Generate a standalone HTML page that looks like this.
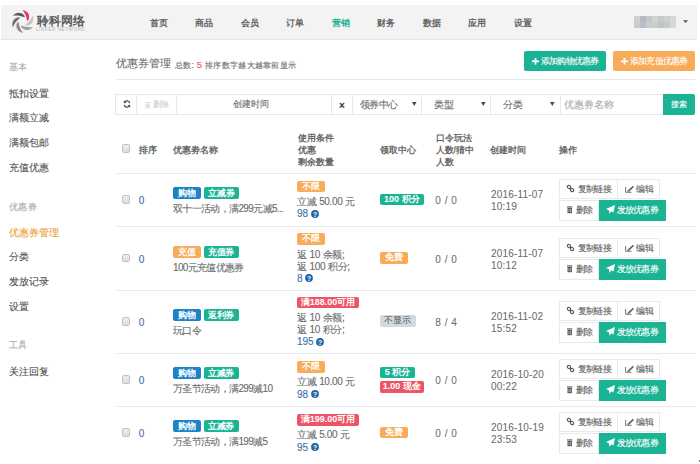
<!DOCTYPE html><html><head><meta charset="utf-8"><style>

*{box-sizing:border-box;margin:0;padding:0}
html,body{width:700px;height:464px;overflow:hidden;background:#fff}
body{position:relative;-webkit-text-stroke:0.1px currentColor;font-family:"Liberation Sans",sans-serif;color:#676a6c;font-size:10px;line-height:1}
.abs{position:absolute;white-space:nowrap}
.hdr{position:absolute;left:1px;top:5px;width:696px;height:35px;background:#f3f3f4;border-bottom:1px solid #e4e4e4}
.nav{position:absolute;-webkit-text-stroke:0;top:17.8px;font-size:9px;font-weight:bold;color:#626262;line-height:10px;width:40px;text-align:center}
.side{position:absolute;left:9px;font-size:9.7px;color:#4d4d4d;line-height:10px}
.side.g{color:#a9a9a9;font-size:9px;letter-spacing:0.3px;margin-top:-0.3px}
.side.act{color:#f0a033;margin-top:0.6px}
.btn{position:absolute;border-radius:2px;color:#fff;font-size:9px;line-height:20px;text-align:center;letter-spacing:-0.8px}
.fb{position:absolute;top:94px;height:21px;border:1px solid #e7e8e9;background:#fff;font-size:9.5px;line-height:19px}
.th{position:absolute;-webkit-text-stroke:0;margin-top:0.6px;font-size:9px;font-weight:bold;color:#666;line-height:12.3px}
.cb{position:absolute;left:121.6px;width:8.5px;height:8.7px;border:1px solid #c2c2c2;border-radius:2px;background:linear-gradient(#ededed,#dddddd)}
.rl{position:absolute;left:116px;width:579px;height:1px;background:#e7eaec}
.lbl{position:absolute;-webkit-text-stroke:0;height:12px;line-height:12px;font-size:9px;letter-spacing:-0.3px;word-spacing:1.5px;font-weight:bold;color:#fff;border-radius:2px;text-align:center}
.blue{background:#1c84c6}.green{background:#1ab394}.orange{background:#f8ac59}.red{background:#ed5565}.gray{background:#d1dade;color:#555;font-weight:normal}
.txt{position:absolute;font-size:10px;letter-spacing:-0.35px;word-spacing:0.4px;color:#676a6c;line-height:12px;white-space:nowrap}
.lnk{color:#3d6ea6}
.ob{position:absolute;height:20px;border:1px solid #e7eaec;background:#fff;font-size:9px;letter-spacing:-0.6px;line-height:18px;color:#5e5e5e;white-space:nowrap}
.og{position:absolute;height:21px;background:#1ab394;color:#fff;font-size:9px;letter-spacing:-0.7px;line-height:21px;white-space:nowrap}
svg{position:absolute;overflow:visible}

</style></head><body>
<div class="hdr"></div>
<svg style="left:0;top:0" width="50" height="40"><g transform="translate(22.8,21.4)"><path d="M-0.2,-11.5 C5.4,-10.5 7.8,-5.8 5.6,-1.2 Q5.1,-0.3 4.3,-0.8 C3.7,-4.6 2.3,-8.3 -0.2,-11.5 Z" fill="#e6336a" transform="rotate(0)"/><path d="M-0.2,-11.5 C5.4,-10.5 7.8,-5.8 5.6,-1.2 Q5.1,-0.3 4.3,-0.8 C3.7,-4.6 2.3,-8.3 -0.2,-11.5 Z" fill="#c4c4c4" transform="rotate(60)"/><path d="M-0.2,-11.5 C5.4,-10.5 7.8,-5.8 5.6,-1.2 Q5.1,-0.3 4.3,-0.8 C3.7,-4.6 2.3,-8.3 -0.2,-11.5 Z" fill="#a0a0a0" transform="rotate(120)"/><path d="M-0.2,-11.5 C5.4,-10.5 7.8,-5.8 5.6,-1.2 Q5.1,-0.3 4.3,-0.8 C3.7,-4.6 2.3,-8.3 -0.2,-11.5 Z" fill="#8a8a8a" transform="rotate(180)"/><path d="M-0.2,-11.5 C5.4,-10.5 7.8,-5.8 5.6,-1.2 Q5.1,-0.3 4.3,-0.8 C3.7,-4.6 2.3,-8.3 -0.2,-11.5 Z" fill="#6e6e6e" transform="rotate(240)"/><path d="M-0.2,-11.5 C5.4,-10.5 7.8,-5.8 5.6,-1.2 Q5.1,-0.3 4.3,-0.8 C3.7,-4.6 2.3,-8.3 -0.2,-11.5 Z" fill="#5c5c5c" transform="rotate(300)"/></g></svg>
<div class="abs" style="left:37px;top:14.5px;font-size:12px;font-weight:normal;color:#555;-webkit-text-stroke:0.45px #555;line-height:13px;letter-spacing:0px">聆科网络</div>
<div class="abs" style="left:36px;top:27.2px;font-size:4.9px;color:#b5b5b5;-webkit-text-stroke:0;line-height:5px;letter-spacing:0.35px">LINKER NETWORK</div>
<div class="nav" style="left:138.6px;">首页</div>
<div class="nav" style="left:184.1px;">商品</div>
<div class="nav" style="left:229.6px;">会员</div>
<div class="nav" style="left:275.1px;">订单</div>
<div class="nav" style="left:320.6px;color:#1ab394">营销</div>
<div class="nav" style="left:366.1px;">财务</div>
<div class="nav" style="left:411.6px;">数据</div>
<div class="nav" style="left:457.1px;">应用</div>
<div class="nav" style="left:502.6px;">设置</div>
<div class="abs" style="left:634px;top:16px;width:6px;height:6px;background:#d3cfcb"></div>
<div class="abs" style="left:640px;top:16px;width:6px;height:6px;background:#b3bac1"></div>
<div class="abs" style="left:646px;top:16px;width:6px;height:6px;background:#c6c6c4"></div>
<div class="abs" style="left:652px;top:16px;width:6px;height:6px;background:#d2d5d3"></div>
<div class="abs" style="left:658px;top:16px;width:6px;height:6px;background:#c5cad0"></div>
<div class="abs" style="left:664px;top:16px;width:6px;height:6px;background:#cfd0cc"></div>
<div class="abs" style="left:670px;top:16px;width:6px;height:6px;background:#d3d6da"></div>
<div class="abs" style="left:634px;top:22px;width:6px;height:6px;background:#cecbc8"></div>
<div class="abs" style="left:640px;top:22px;width:6px;height:6px;background:#b8bec3"></div>
<div class="abs" style="left:646px;top:22px;width:6px;height:6px;background:#cbcdcc"></div>
<div class="abs" style="left:652px;top:22px;width:6px;height:6px;background:#cacccc"></div>
<div class="abs" style="left:658px;top:22px;width:6px;height:6px;background:#bfc4c9"></div>
<div class="abs" style="left:664px;top:22px;width:6px;height:6px;background:#c9cac8"></div>
<div class="abs" style="left:670px;top:22px;width:6px;height:6px;background:#d6d8db"></div>
<svg style="left:683px;top:20px" width="6" height="4"><path d="M0,0.3 L5,0.3 L2.5,3 Z" fill="#555"/></svg>
<div class="side g" style="top:62.5px">基本</div>
<div class="side " style="top:88.8px">抵扣设置</div>
<div class="side " style="top:113.2px">满额立减</div>
<div class="side " style="top:137.6px">满额包邮</div>
<div class="side " style="top:163px">充值优惠</div>
<div class="side g" style="top:202px">优惠券</div>
<div class="side act" style="top:227.3px">优惠券管理</div>
<div class="side " style="top:252px">分类</div>
<div class="side " style="top:277px">发放记录</div>
<div class="side " style="top:302px">设置</div>
<div class="side g" style="top:340px">工具</div>
<div class="side " style="top:366.5px">关注回复</div>
<div class="abs" style="left:115.5px;top:57px;font-size:11.4px;color:#6a6a6a;line-height:13px">优惠券管理</div>
<div class="abs" style="left:175px;top:60px;font-size:8.4px;color:#6a6a6a;line-height:9px;letter-spacing:0.3px">总数: <span style="color:#ed5565;font-size:9.5px">5</span> 排序数字越大越靠前显示</div>
<div class="rl" style="top:79px"></div>
<div class="btn green" style="left:524px;top:51px;width:82px;height:20px;text-align:left"><svg style="left:7.5px;top:6.8px" width="7" height="7" viewBox="0 0 7 7"><rect x="2.6" y="0" width="1.8" height="6.6" fill="#fff"/><rect x="0" y="2.4" width="7" height="1.8" fill="#fff"/></svg><span style="position:absolute;left:17px;top:0">添加购物优惠券</span></div>
<div class="btn orange" style="left:613px;top:51px;width:82px;height:20px;text-align:left"><svg style="left:7.5px;top:6.8px" width="7" height="7" viewBox="0 0 7 7"><rect x="2.6" y="0" width="1.8" height="6.6" fill="#fff"/><rect x="0" y="2.4" width="7" height="1.8" fill="#fff"/></svg><span style="position:absolute;left:17px;top:0">添加充值优惠券</span></div>
<div class="fb" style="left:115px;width:22px;"></div>
<svg style="left:122.6px;top:100.3px" width="8" height="8" viewBox="0 0 9 9"><path d="M7.6,3.6 A3.3,3.3 0 0 0 1.5,2.6" stroke="#444" stroke-width="1.4" fill="none"/><path d="M0.6,0.8 L1.2,3.6 L4,3 Z" fill="#444"/><path d="M1.4,5.4 A3.3,3.3 0 0 0 7.5,6.4" stroke="#444" stroke-width="1.4" fill="none"/><path d="M8.4,8.2 L7.8,5.4 L5,6 Z" fill="#444"/></svg>
<div class="fb" style="left:136px;width:41px;"><svg style="left:7.5px;top:6.5px" width="6" height="7" viewBox="0 0 6 7"><rect x="0" y="0" width="5.5" height="1" fill="#ddd"/><rect x="0.4" y="1.6" width="4.7" height="4.8" fill="#e3e3e3"/></svg><span style="position:absolute;left:16px;top:0;color:#cfcfcf;font-size:8px;letter-spacing:0.4px">删除</span></div>
<div class="fb" style="left:176px;width:157px;"><span style="position:absolute;left:55.5px;color:#676a6c;font-size:9px">创建时间</span></div>
<div class="fb" style="left:331px;width:22px;"><span style="position:absolute;left:7px;top:0.5px;font-weight:bold;color:#3a3a3a;font-size:10px">×</span></div>
<div class="fb" style="left:352px;width:70px;"><span style="position:absolute;left:7px;color:#676a6c;font-size:10px;letter-spacing:-0.6px">领券中心</span></div>
<svg style="left:412.29999999999995px;top:102px" width="5" height="5"><path d="M0,0 L4.6,0 L2.3,4 Z" fill="#4a4a4a"/></svg>
<div class="fb" style="left:421px;width:70px;"><span style="position:absolute;left:11.5px;color:#676a6c;font-size:10px;letter-spacing:0px">类型</span></div>
<svg style="left:481.29999999999995px;top:102px" width="5" height="5"><path d="M0,0 L4.6,0 L2.3,4 Z" fill="#4a4a4a"/></svg>
<div class="fb" style="left:490px;width:70.60000000000002px;"><span style="position:absolute;left:11.5px;color:#676a6c;font-size:10px;letter-spacing:0px">分类</span></div>
<svg style="left:550.3px;top:102px" width="5" height="5"><path d="M0,0 L4.6,0 L2.3,4 Z" fill="#4a4a4a"/></svg>
<div class="fb" style="left:559.6px;width:104.39999999999998px;"><span style="position:absolute;left:3px;color:#aaa;font-size:10px">优惠券名称</span></div>
<div class="btn green" style="left:663px;top:94px;width:32px;height:21px;line-height:21px;border-radius:0 2px 2px 0;font-size:8px;letter-spacing:0.3px">搜索</div>
<div class="cb" style="top:144px"></div>
<div class="th" style="left:138.5px;top:143px">排序</div>
<div class="th" style="left:173.4px;top:143px">优惠劵名称</div>
<div class="th" style="left:297.5px;top:131px">使用条件<br>优惠<br>剩余数量</div>
<div class="th" style="left:380px;top:143px">领取中心</div>
<div class="th" style="left:435.5px;top:131px">口令玩法<br>人数/猜中<br>人数</div>
<div class="th" style="left:490px;top:143px">创建时间</div>
<div class="th" style="left:559.2px;top:143px">操作</div>
<div class="rl" style="top:172.5px"></div>
<div class="cb" style="top:195.1px"></div>
<div class="txt lnk" style="left:138.8px;top:194.89999999999998px;font-size:10px;letter-spacing:0">0</div>
<div class="lbl blue" style="left:173px;top:187.1px;width:27.5px">购物</div>
<div class="lbl green" style="left:203.5px;top:187.1px;width:35.5px">立减券</div>
<div class="txt" style="left:173px;top:202.89999999999998px;letter-spacing:-0.65px">双十一活动，满299元减5...</div>
<div class="lbl orange" style="left:297px;top:180.95px;width:27.5px;height:11.5px;line-height:11.5px;letter-spacing:0">不限</div>
<div class="txt" style="left:297px;top:196.04999999999998px">立减 50.00 元</div>
<div class="txt lnk" style="left:297px;top:208.35px;font-size:10px;letter-spacing:0">98</div>
<svg style="left:310.82px;top:209.64999999999998px" width="8" height="8" viewBox="0 0 8 8"><circle cx="4" cy="4" r="3.9" fill="#2064a8"/><text x="4" y="6.5" font-size="6.8" font-weight="bold" text-anchor="middle" fill="#fff" font-family="Liberation Sans">?</text></svg>
<div class="lbl green" style="left:380px;top:193.54999999999998px;width:43.7px;height:11.5px;line-height:11.5px;letter-spacing:0;word-spacing:0">100 积分</div>
<div class="txt" style="left:435.3px;top:195.1px;font-size:10px;letter-spacing:0;word-spacing:1px;-webkit-text-stroke:0.05px currentColor">0 / 0</div>
<div class="txt" style="left:491px;top:189.1px;font-size:10px;letter-spacing:0.18px;-webkit-text-stroke:0.05px currentColor">2016-11-07<br>10:19</div>
<div class="ob" style="left:559.2px;top:179px;width:58.5px"><svg style="left:5.6px;top:4.4px" width="9" height="9" viewBox="0 0 9 9"><g transform="rotate(-45 4.5 4.5)" stroke="#555" stroke-width="1.1" fill="none"><rect x="3" y="0.6" width="3" height="3.5" rx="1.5"/><rect x="3" y="4.9" width="3" height="3.5" rx="1.5"/><line x1="4.5" y1="3.6" x2="4.5" y2="5.4"/></g></svg><span style="position:absolute;left:17.5px">复制链接</span></div>
<div class="ob" style="left:617.4px;top:179px;width:42.5px"><svg style="left:6.5px;top:4.6px" width="10" height="8" viewBox="0 0 10 8"><path d="M0.6,2 V7.3 H6.5" stroke="#777" stroke-width="1" fill="none"/><path d="M2.8,5.6 L7.8,0.8 L9,1.9 L4.1,6.7 L2.4,7 Z" fill="#666"/></svg><span style="position:absolute;left:18px">编辑</span></div>
<div class="ob" style="left:559px;top:199.5px;width:40px;height:21px;line-height:19px"><svg style="left:6.6px;top:5.6px" width="6" height="8" viewBox="0 0 6 8"><rect x="0" y="0.4" width="5.4" height="1.1" fill="#555"/><rect x="0.5" y="2" width="4.4" height="5.2" fill="#555"/><rect x="1.6" y="3" width="0.7" height="3.2" fill="#ccc"/><rect x="3.1" y="3" width="0.7" height="3.2" fill="#ccc"/></svg><span style="position:absolute;left:15.5px">删除</span></div>
<div class="og" style="left:598.5px;top:199.5px;width:67.5px"><svg style="left:7.3px;top:5.8px" width="9" height="9" viewBox="0 0 8 8"><path d="M8,0 L0,3.6 L2.6,4.6 L3.2,8 L4.6,5.6 L6.6,6.6 Z" fill="#fff"/></svg><span style="position:absolute;left:18px">发放优惠券</span></div>
<div class="rl" style="top:226.0px"></div>
<div class="cb" style="top:253.70000000000002px"></div>
<div class="txt lnk" style="left:138.8px;top:253.5px;font-size:10px;letter-spacing:0">0</div>
<div class="lbl orange" style="left:173px;top:245.70000000000002px;width:27.5px">充值</div>
<div class="lbl green" style="left:203.5px;top:245.70000000000002px;width:35px">充值券</div>
<div class="txt" style="left:173px;top:261.5px;letter-spacing:-0.65px">100元充值优惠券</div>
<div class="lbl orange" style="left:297px;top:233.40000000000003px;width:27.5px;height:11.5px;line-height:11.5px;letter-spacing:0">不限</div>
<div class="txt" style="left:297px;top:248.50000000000003px">返 10 余额;</div>
<div class="txt" style="left:297px;top:260.8px">返 100 积分;</div>
<div class="txt lnk" style="left:297px;top:273.1px;font-size:10px;letter-spacing:0">8</div>
<svg style="left:305.26px;top:274.40000000000003px" width="8" height="8" viewBox="0 0 8 8"><circle cx="4" cy="4" r="3.9" fill="#2064a8"/><text x="4" y="6.5" font-size="6.8" font-weight="bold" text-anchor="middle" fill="#fff" font-family="Liberation Sans">?</text></svg>
<div class="lbl orange" style="left:380px;top:252.15px;width:27.5px;height:11.5px;line-height:11.5px;letter-spacing:0;word-spacing:0">免费</div>
<div class="txt" style="left:435.3px;top:253.70000000000002px;font-size:10px;letter-spacing:0;word-spacing:1px;-webkit-text-stroke:0.05px currentColor">0 / 0</div>
<div class="txt" style="left:491px;top:247.70000000000002px;font-size:10px;letter-spacing:0.18px;-webkit-text-stroke:0.05px currentColor">2016-11-07<br>10:12</div>
<div class="ob" style="left:559.2px;top:238px;width:58.5px"><svg style="left:5.6px;top:4.4px" width="9" height="9" viewBox="0 0 9 9"><g transform="rotate(-45 4.5 4.5)" stroke="#555" stroke-width="1.1" fill="none"><rect x="3" y="0.6" width="3" height="3.5" rx="1.5"/><rect x="3" y="4.9" width="3" height="3.5" rx="1.5"/><line x1="4.5" y1="3.6" x2="4.5" y2="5.4"/></g></svg><span style="position:absolute;left:17.5px">复制链接</span></div>
<div class="ob" style="left:617.4px;top:238px;width:42.5px"><svg style="left:6.5px;top:4.6px" width="10" height="8" viewBox="0 0 10 8"><path d="M0.6,2 V7.3 H6.5" stroke="#777" stroke-width="1" fill="none"/><path d="M2.8,5.6 L7.8,0.8 L9,1.9 L4.1,6.7 L2.4,7 Z" fill="#666"/></svg><span style="position:absolute;left:18px">编辑</span></div>
<div class="ob" style="left:559px;top:258.5px;width:40px;height:21px;line-height:19px"><svg style="left:6.6px;top:5.6px" width="6" height="8" viewBox="0 0 6 8"><rect x="0" y="0.4" width="5.4" height="1.1" fill="#555"/><rect x="0.5" y="2" width="4.4" height="5.2" fill="#555"/><rect x="1.6" y="3" width="0.7" height="3.2" fill="#ccc"/><rect x="3.1" y="3" width="0.7" height="3.2" fill="#ccc"/></svg><span style="position:absolute;left:15.5px">删除</span></div>
<div class="og" style="left:598.5px;top:258.5px;width:67.5px"><svg style="left:7.3px;top:5.8px" width="9" height="9" viewBox="0 0 8 8"><path d="M8,0 L0,3.6 L2.6,4.6 L3.2,8 L4.6,5.6 L6.6,6.6 Z" fill="#fff"/></svg><span style="position:absolute;left:18px">发放优惠券</span></div>
<div class="rl" style="top:289.5px"></div>
<div class="cb" style="top:317.0px"></div>
<div class="txt lnk" style="left:138.8px;top:316.8px;font-size:10px;letter-spacing:0">0</div>
<div class="lbl blue" style="left:173px;top:309.0px;width:27.5px">购物</div>
<div class="lbl green" style="left:203.5px;top:309.0px;width:35px">返利券</div>
<div class="txt" style="left:173px;top:324.8px;letter-spacing:-0.65px">玩口令</div>
<div class="lbl red" style="left:297px;top:296.70000000000005px;width:62px;height:11.5px;line-height:11.5px;letter-spacing:0">满188.00可用</div>
<div class="txt" style="left:297px;top:311.80000000000007px">返 10 余额;</div>
<div class="txt" style="left:297px;top:324.1000000000001px">返 10 积分;</div>
<div class="txt lnk" style="left:297px;top:336.4000000000001px;font-size:10px;letter-spacing:0">195</div>
<svg style="left:316.38px;top:337.7000000000001px" width="8" height="8" viewBox="0 0 8 8"><circle cx="4" cy="4" r="3.9" fill="#2064a8"/><text x="4" y="6.5" font-size="6.8" font-weight="bold" text-anchor="middle" fill="#fff" font-family="Liberation Sans">?</text></svg>
<div class="lbl gray" style="left:380px;top:315.45000000000005px;width:35.6px;height:11.5px;line-height:11.5px;letter-spacing:0;word-spacing:0">不显示</div>
<div class="txt" style="left:435.3px;top:317.0px;font-size:10px;letter-spacing:0;word-spacing:1px;-webkit-text-stroke:0.05px currentColor">8 / 4</div>
<div class="txt" style="left:491px;top:311.0px;font-size:10px;letter-spacing:0.18px;-webkit-text-stroke:0.05px currentColor">2016-11-02<br>15:52</div>
<div class="ob" style="left:559.2px;top:301px;width:58.5px"><svg style="left:5.6px;top:4.4px" width="9" height="9" viewBox="0 0 9 9"><g transform="rotate(-45 4.5 4.5)" stroke="#555" stroke-width="1.1" fill="none"><rect x="3" y="0.6" width="3" height="3.5" rx="1.5"/><rect x="3" y="4.9" width="3" height="3.5" rx="1.5"/><line x1="4.5" y1="3.6" x2="4.5" y2="5.4"/></g></svg><span style="position:absolute;left:17.5px">复制链接</span></div>
<div class="ob" style="left:617.4px;top:301px;width:42.5px"><svg style="left:6.5px;top:4.6px" width="10" height="8" viewBox="0 0 10 8"><path d="M0.6,2 V7.3 H6.5" stroke="#777" stroke-width="1" fill="none"/><path d="M2.8,5.6 L7.8,0.8 L9,1.9 L4.1,6.7 L2.4,7 Z" fill="#666"/></svg><span style="position:absolute;left:18px">编辑</span></div>
<div class="ob" style="left:559px;top:321.5px;width:40px;height:21px;line-height:19px"><svg style="left:6.6px;top:5.6px" width="6" height="8" viewBox="0 0 6 8"><rect x="0" y="0.4" width="5.4" height="1.1" fill="#555"/><rect x="0.5" y="2" width="4.4" height="5.2" fill="#555"/><rect x="1.6" y="3" width="0.7" height="3.2" fill="#ccc"/><rect x="3.1" y="3" width="0.7" height="3.2" fill="#ccc"/></svg><span style="position:absolute;left:15.5px">删除</span></div>
<div class="og" style="left:598.5px;top:321.5px;width:67.5px"><svg style="left:7.3px;top:5.8px" width="9" height="9" viewBox="0 0 8 8"><path d="M8,0 L0,3.6 L2.6,4.6 L3.2,8 L4.6,5.6 L6.6,6.6 Z" fill="#fff"/></svg><span style="position:absolute;left:18px">发放优惠券</span></div>
<div class="rl" style="top:353.0px"></div>
<div class="cb" style="top:375.4px"></div>
<div class="txt lnk" style="left:138.8px;top:375.2px;font-size:10px;letter-spacing:0">0</div>
<div class="lbl blue" style="left:173px;top:367.4px;width:27.5px">购物</div>
<div class="lbl green" style="left:203.5px;top:367.4px;width:35px">立减券</div>
<div class="txt" style="left:173px;top:383.2px;letter-spacing:-0.65px">万圣节活动，满299减10</div>
<div class="lbl orange" style="left:297px;top:361.25px;width:27.5px;height:11.5px;line-height:11.5px;letter-spacing:0">不限</div>
<div class="txt" style="left:297px;top:376.35px">立减 10.00 元</div>
<div class="txt lnk" style="left:297px;top:388.65000000000003px;font-size:10px;letter-spacing:0">98</div>
<svg style="left:310.82px;top:389.95000000000005px" width="8" height="8" viewBox="0 0 8 8"><circle cx="4" cy="4" r="3.9" fill="#2064a8"/><text x="4" y="6.5" font-size="6.8" font-weight="bold" text-anchor="middle" fill="#fff" font-family="Liberation Sans">?</text></svg>
<div class="lbl green" style="left:380px;top:366.6px;width:34.8px;height:11.5px;line-height:11.5px;letter-spacing:0;word-spacing:0">5 积分</div>
<div class="lbl red" style="left:380px;top:381.20000000000005px;width:43.7px;height:11.5px;line-height:11.5px;letter-spacing:0;word-spacing:0">1.00 现金</div>
<div class="txt" style="left:435.3px;top:375.4px;font-size:10px;letter-spacing:0;word-spacing:1px;-webkit-text-stroke:0.05px currentColor">0 / 0</div>
<div class="txt" style="left:491px;top:369.4px;font-size:10px;letter-spacing:0.18px;-webkit-text-stroke:0.05px currentColor">2016-10-20<br>00:22</div>
<div class="ob" style="left:559.2px;top:359px;width:58.5px"><svg style="left:5.6px;top:4.4px" width="9" height="9" viewBox="0 0 9 9"><g transform="rotate(-45 4.5 4.5)" stroke="#555" stroke-width="1.1" fill="none"><rect x="3" y="0.6" width="3" height="3.5" rx="1.5"/><rect x="3" y="4.9" width="3" height="3.5" rx="1.5"/><line x1="4.5" y1="3.6" x2="4.5" y2="5.4"/></g></svg><span style="position:absolute;left:17.5px">复制链接</span></div>
<div class="ob" style="left:617.4px;top:359px;width:42.5px"><svg style="left:6.5px;top:4.6px" width="10" height="8" viewBox="0 0 10 8"><path d="M0.6,2 V7.3 H6.5" stroke="#777" stroke-width="1" fill="none"/><path d="M2.8,5.6 L7.8,0.8 L9,1.9 L4.1,6.7 L2.4,7 Z" fill="#666"/></svg><span style="position:absolute;left:18px">编辑</span></div>
<div class="ob" style="left:559px;top:379.5px;width:40px;height:21px;line-height:19px"><svg style="left:6.6px;top:5.6px" width="6" height="8" viewBox="0 0 6 8"><rect x="0" y="0.4" width="5.4" height="1.1" fill="#555"/><rect x="0.5" y="2" width="4.4" height="5.2" fill="#555"/><rect x="1.6" y="3" width="0.7" height="3.2" fill="#ccc"/><rect x="3.1" y="3" width="0.7" height="3.2" fill="#ccc"/></svg><span style="position:absolute;left:15.5px">删除</span></div>
<div class="og" style="left:598.5px;top:379.5px;width:67.5px"><svg style="left:7.3px;top:5.8px" width="9" height="9" viewBox="0 0 8 8"><path d="M8,0 L0,3.6 L2.6,4.6 L3.2,8 L4.6,5.6 L6.6,6.6 Z" fill="#fff"/></svg><span style="position:absolute;left:18px">发放优惠券</span></div>
<div class="rl" style="top:406.0px"></div>
<div class="cb" style="top:428.4px"></div>
<div class="txt lnk" style="left:138.8px;top:428.2px;font-size:10px;letter-spacing:0">0</div>
<div class="lbl blue" style="left:173px;top:420.4px;width:27.5px">购物</div>
<div class="lbl green" style="left:203.5px;top:420.4px;width:35px">立减券</div>
<div class="txt" style="left:173px;top:436.2px;letter-spacing:-0.65px">万圣节活动，满199减5</div>
<div class="lbl red" style="left:297px;top:414.25px;width:62px;height:11.5px;line-height:11.5px;letter-spacing:0">满199.00可用</div>
<div class="txt" style="left:297px;top:429.35px">立减 5.00 元</div>
<div class="txt lnk" style="left:297px;top:441.65000000000003px;font-size:10px;letter-spacing:0">95</div>
<svg style="left:310.82px;top:442.95000000000005px" width="8" height="8" viewBox="0 0 8 8"><circle cx="4" cy="4" r="3.9" fill="#2064a8"/><text x="4" y="6.5" font-size="6.8" font-weight="bold" text-anchor="middle" fill="#fff" font-family="Liberation Sans">?</text></svg>
<div class="lbl orange" style="left:380px;top:426.85px;width:27.5px;height:11.5px;line-height:11.5px;letter-spacing:0;word-spacing:0">免费</div>
<div class="txt" style="left:435.3px;top:428.4px;font-size:10px;letter-spacing:0;word-spacing:1px;-webkit-text-stroke:0.05px currentColor">0 / 0</div>
<div class="txt" style="left:491px;top:422.4px;font-size:10px;letter-spacing:0.18px;-webkit-text-stroke:0.05px currentColor">2016-10-19<br>23:53</div>
<div class="ob" style="left:559.2px;top:412px;width:58.5px"><svg style="left:5.6px;top:4.4px" width="9" height="9" viewBox="0 0 9 9"><g transform="rotate(-45 4.5 4.5)" stroke="#555" stroke-width="1.1" fill="none"><rect x="3" y="0.6" width="3" height="3.5" rx="1.5"/><rect x="3" y="4.9" width="3" height="3.5" rx="1.5"/><line x1="4.5" y1="3.6" x2="4.5" y2="5.4"/></g></svg><span style="position:absolute;left:17.5px">复制链接</span></div>
<div class="ob" style="left:617.4px;top:412px;width:42.5px"><svg style="left:6.5px;top:4.6px" width="10" height="8" viewBox="0 0 10 8"><path d="M0.6,2 V7.3 H6.5" stroke="#777" stroke-width="1" fill="none"/><path d="M2.8,5.6 L7.8,0.8 L9,1.9 L4.1,6.7 L2.4,7 Z" fill="#666"/></svg><span style="position:absolute;left:18px">编辑</span></div>
<div class="ob" style="left:559px;top:432.5px;width:40px;height:21px;line-height:19px"><svg style="left:6.6px;top:5.6px" width="6" height="8" viewBox="0 0 6 8"><rect x="0" y="0.4" width="5.4" height="1.1" fill="#555"/><rect x="0.5" y="2" width="4.4" height="5.2" fill="#555"/><rect x="1.6" y="3" width="0.7" height="3.2" fill="#ccc"/><rect x="3.1" y="3" width="0.7" height="3.2" fill="#ccc"/></svg><span style="position:absolute;left:15.5px">删除</span></div>
<div class="og" style="left:598.5px;top:432.5px;width:67.5px"><svg style="left:7.3px;top:5.8px" width="9" height="9" viewBox="0 0 8 8"><path d="M8,0 L0,3.6 L2.6,4.6 L3.2,8 L4.6,5.6 L6.6,6.6 Z" fill="#fff"/></svg><span style="position:absolute;left:18px">发放优惠券</span></div>
<div class="abs" style="left:698.5px;top:459.5px;width:1.5px;height:2px;background:#777"></div>
</body></html>
